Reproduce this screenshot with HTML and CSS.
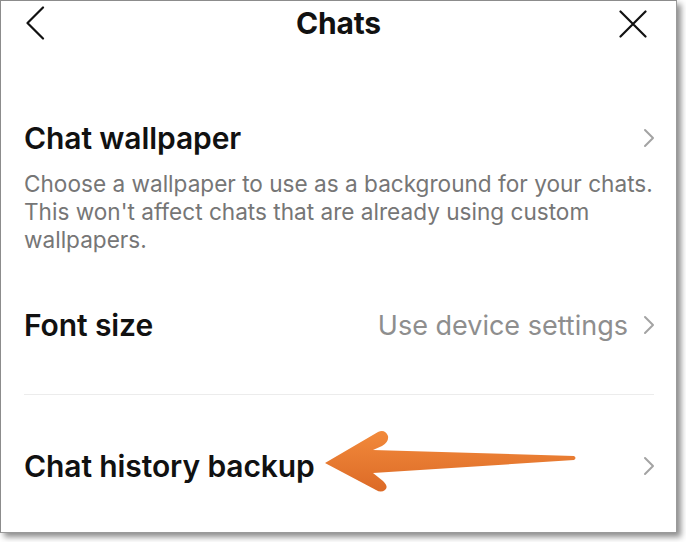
FILE: index.html
```html
<!DOCTYPE html>
<html>
<head>
<meta charset="utf-8">
<link rel="stylesheet" href="styles.css">
</head>
<body>
<div class="card">
  <header class="topbar">
    <svg class="back" width="20" height="34" viewBox="0 0 20 34"><path d="M18 1.5 L2.5 17 L18 32.5" fill="none" stroke="#111" stroke-width="2.2" stroke-linecap="round" stroke-linejoin="round"/></svg>
    <h1 class="title">Chats</h1>
    <svg class="close" width="28" height="28" viewBox="0 0 28 28"><path d="M1.5 1.5 L26.5 26.5 M26.5 1.5 L1.5 26.5" fill="none" stroke="#111" stroke-width="2.2" stroke-linecap="round"/></svg>
  </header>

  <div class="row row-wallpaper">
    <span class="label">Chat wallpaper</span>
    <svg class="chev" width="12" height="20" viewBox="0 0 12 20"><path d="M2 2 L10 10 L2 18" fill="none" stroke="#a3a3a3" stroke-width="2" stroke-linecap="round" stroke-linejoin="round"/></svg>
  </div>
  <p class="desc">Choose a wallpaper to use as a background for your chats. This won't affect chats that are already using custom wallpapers.</p>

  <div class="row row-font">
    <span class="label">Font size</span>
    <span class="value">Use device settings</span>
    <svg class="chev" width="12" height="20" viewBox="0 0 12 20"><path d="M2 2 L10 10 L2 18" fill="none" stroke="#a3a3a3" stroke-width="2" stroke-linecap="round" stroke-linejoin="round"/></svg>
  </div>

  <div class="sep"></div>

  <div class="row row-backup">
    <span class="label">Chat history backup</span>
    <svg class="chev" width="12" height="20" viewBox="0 0 12 20"><path d="M2 2 L10 10 L2 18" fill="none" stroke="#a3a3a3" stroke-width="2" stroke-linecap="round" stroke-linejoin="round"/></svg>
  </div>

  <svg class="arrow" width="262" height="70" viewBox="0 0 262 70">
    <defs>
      <linearGradient id="og" x1="0" y1="0" x2="0" y2="1">
        <stop offset="0" stop-color="#f28a3b"/>
        <stop offset="1" stop-color="#dc6a27"/>
      </linearGradient>
    </defs>
    <path d="M6 37 L59 6 Q66 3 69 10 Q70 16 63 20 L54 24 L255 30 Q258 32 255 34 L54 47 L64 55 Q70 61 66 64 Q62 67 57 64 Z" fill="url(#og)"/>
  </svg>
</div>
</body>
</html>
```

FILE: styles.css
```css
html, body {
  margin: 0;
  padding: 0;
  background: #ffffff;
}
body {
  width: 686px;
  height: 542px;
  overflow: hidden;
  font-family: Inter, "Noto Sans", "Liberation Sans", sans-serif;
  color: #111;
}
.card {
  position: relative;
  box-sizing: border-box;
  width: 677px;
  height: 533px;
  background: #fff;
  border-top: 1px solid #8c8c8c;
  border-left: 1px solid #8c8c8c;
  border-right: 1px solid #9a9a9a;
  border-bottom: 1px solid #9a9a9a;
  box-shadow: 4px 4px 6px rgba(0,0,0,0.45);
  display: flex;
  flex-direction: column;
  padding: 0 22px 0 23px;
}
.topbar {
  height: 46px;
  display: flex;
  align-items: center;
  justify-content: space-between;
}
.back {
  margin-left: 1px;
  margin-top: -2px;
}
.close {
  margin-top: -1px;
  margin-right: 7px;
}
.title {
  margin: 0;
  font-size: 30px;
  font-weight: 700;
  letter-spacing: -0.2px;
  margin-top: -3px;
  padding-left: 13px;
}
.row {
  display: flex;
  align-items: center;
}
.row .label {
  font-size: 30px;
  font-weight: 600;
  letter-spacing: -0.1px;
  flex: 1;
}
.row .chev {
  margin-right: -1px;
}
.row-wallpaper {
  margin-top: 71px;
  height: 40px;
}
.desc {
  margin: 12px -4px 0 0;
  font-size: 22.6px;
  line-height: 28px;
  color: #767676;
}
.row-font {
  margin-top: 51px;
  height: 40px;
}
.value {
  font-size: 27px;
  color: #8e8e8e;
  margin-right: 15px;
}
.sep {
  height: 1px;
  background: #ececec;
  margin-top: 49px;
}
.row-backup {
  margin-top: 51px;
  height: 40px;
}
.arrow {
  position: absolute;
  left: 318px;
  top: 425px;
}
```
